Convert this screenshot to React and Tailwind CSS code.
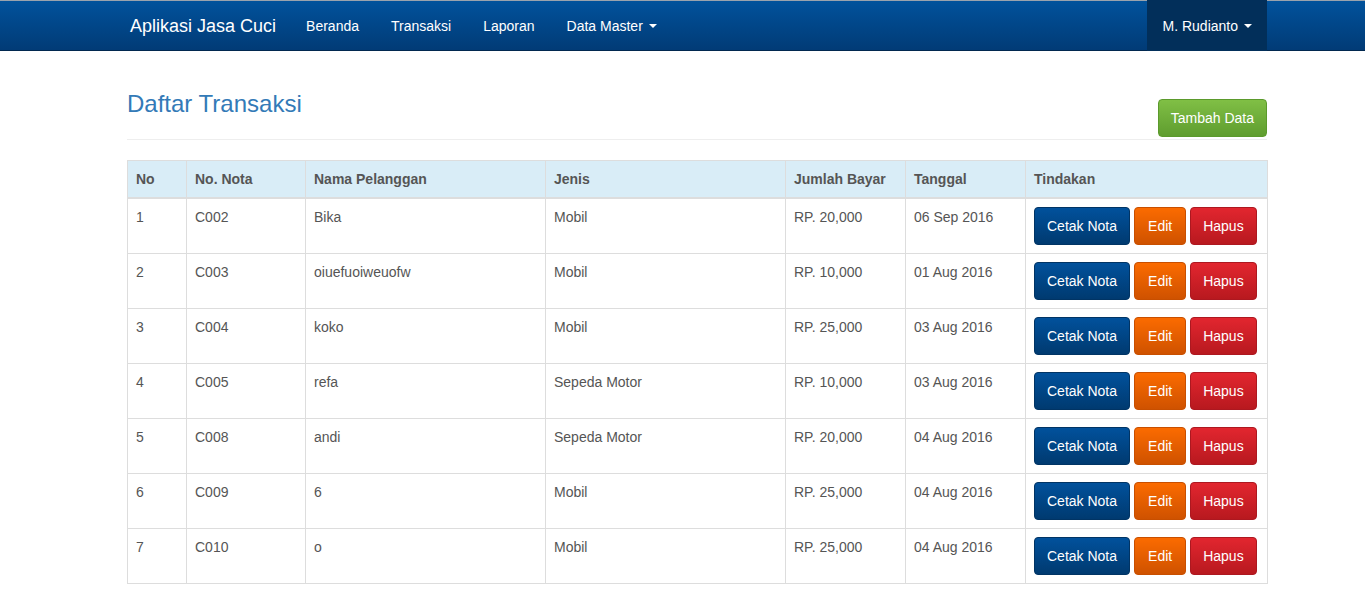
import React from "react";

const rows = [
  ["1", "C002", "Bika", "Mobil", "RP. 20,000", "06 Sep 2016"],
  ["2", "C003", "oiuefuoiweuofw", "Mobil", "RP. 10,000", "01 Aug 2016"],
  ["3", "C004", "koko", "Mobil", "RP. 25,000", "03 Aug 2016"],
  ["4", "C005", "refa", "Sepeda Motor", "RP. 10,000", "03 Aug 2016"],
  ["5", "C008", "andi", "Sepeda Motor", "RP. 20,000", "04 Aug 2016"],
  ["6", "C009", "6", "Mobil", "RP. 25,000", "04 Aug 2016"],
  ["7", "C010", "o", "Mobil", "RP. 25,000", "04 Aug 2016"],
];

function Caret() {
  return (
    <span className="inline-block ml-[6px] align-middle w-0 h-0 border-l-4 border-r-4 border-t-4 border-l-transparent border-r-transparent border-t-white"></span>
  );
}

export default function App() {
  return (
    <div className="min-h-[613px] bg-white text-[14px] leading-[20px] text-[#555]" style={{ fontFamily: '"Liberation Sans", Arial, sans-serif' }}>
      <nav className="h-[51px] border-t border-t-[#9aa3ad] border-b border-b-[#01284f] bg-gradient-to-b from-[#01529c] to-[#013b76]">
        <div className="ml-[127px] w-[1140px] h-full flex items-stretch">
          <a className="flex items-center pl-[3px] pr-[14px] text-[18px] text-white h-full">Aplikasi Jasa Cuci</a>
          <ul className="flex items-stretch">
            {["Beranda", "Transaksi", "Laporan"].map((t) => (
              <li key={t} className="flex items-center px-[16px] text-white">{t}</li>
            ))}
            <li className="flex items-center px-[16px] text-white">Data Master<Caret /></li>
          </ul>
          <div className="ml-auto flex items-center pl-[16px] pr-[15px] bg-[#022f5a] text-white -mt-px -mb-px">M. Rudianto<Caret /></div>
        </div>
      </nav>

      <div className="ml-[127px] w-[1140px]">
        <div className="mt-[40px] flex items-start justify-between pb-[2px] border-b border-[#eee]">
          <h3 className="text-[24px] leading-[26px] text-[#337ab7]">Daftar Transaksi</h3>
          <button className="mt-[8px] h-[38px] px-[12px] rounded-[4px] border border-[#5b9a2c] bg-gradient-to-b from-[#80bf45] to-[#5f9d2f] text-white text-[14px]">Tambah Data</button>
        </div>

        <table className="mt-[20px] w-[1140px] table-fixed border-collapse border border-[#ddd]">
          <colgroup>
            <col className="w-[59px]" />
            <col className="w-[119px]" />
            <col className="w-[240px]" />
            <col className="w-[240px]" />
            <col className="w-[120px]" />
            <col className="w-[120px]" />
            <col className="w-[242px]" />
          </colgroup>
          <thead>
            <tr className="bg-[#d9edf7]">
              {["No", "No. Nota", "Nama Pelanggan", "Jenis", "Jumlah Bayar", "Tanggal", "Tindakan"].map((h) => (
                <th key={h} className="text-left font-bold text-[#555] p-[8px] border border-[#ddd] border-b-2">{h}</th>
              ))}
            </tr>
          </thead>
          <tbody>
            {rows.map((r) => (
              <tr key={r[0]}>
                {r.map((c, i) => (
                  <td key={i} className="align-top p-[8px] border border-[#ddd]">{c}</td>
                ))}
                <td className="align-top p-[8px] border border-[#ddd]">
                  <div className="flex gap-[4px]">
                    <button className="h-[38px] px-[12px] rounded-[4px] border border-[#013464] bg-gradient-to-b from-[#01519c] to-[#003a70] text-white">Cetak Nota</button>
                    <button className="h-[38px] px-[13px] rounded-[4px] border border-[#c84f00] bg-gradient-to-b from-[#fb6b00] to-[#cf5200] text-white">Edit</button>
                    <button className="h-[38px] px-[12px] rounded-[4px] border border-[#ad1820] bg-gradient-to-b from-[#e2262f] to-[#b8191f] text-white">Hapus</button>
                  </div>
                </td>
              </tr>
            ))}
          </tbody>
        </table>
      </div>
    </div>
  );
}
